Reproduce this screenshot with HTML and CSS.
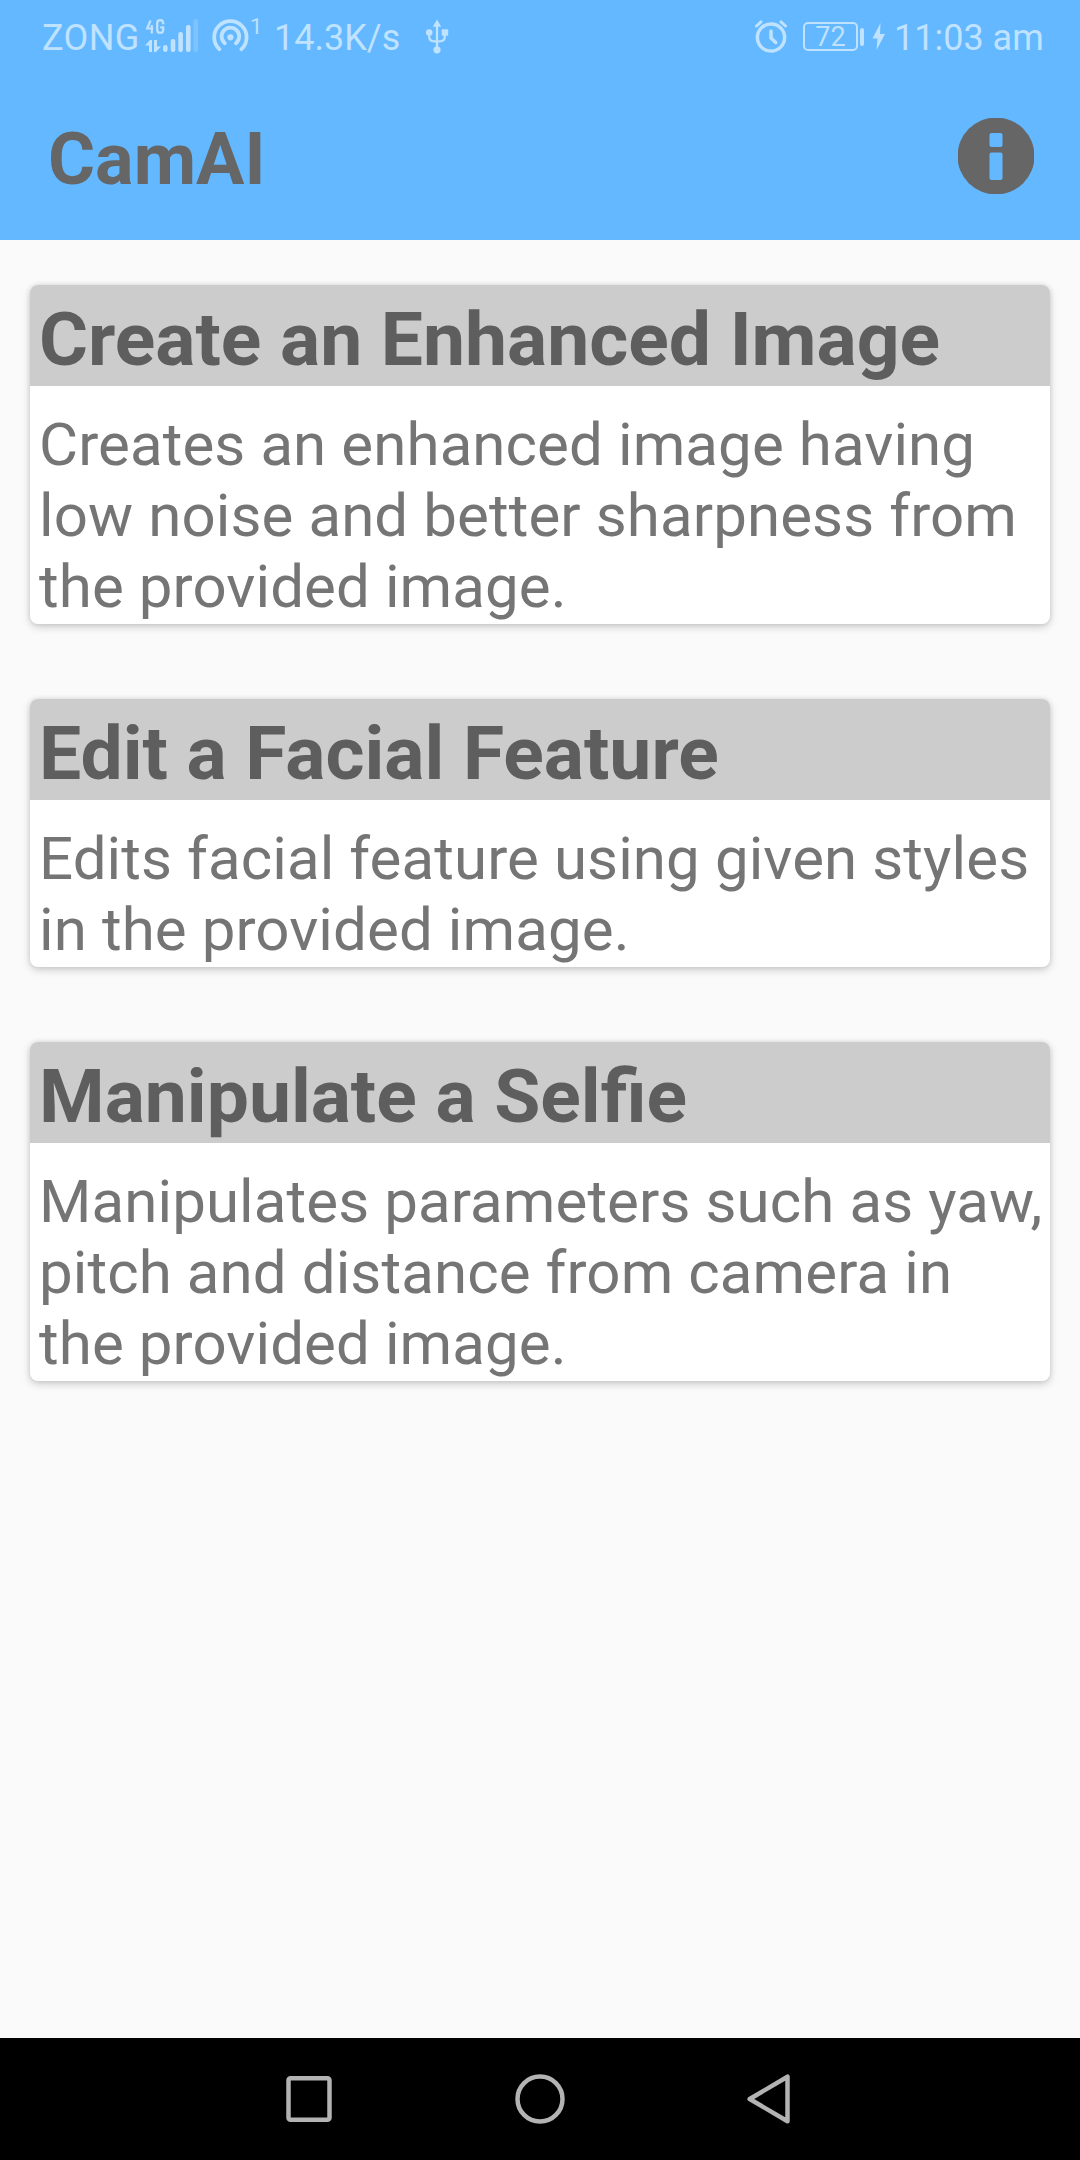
FILE: index.html
```html
<!DOCTYPE html>
<html lang="en">
<head>
<meta charset="utf-8">
<title>CamAI</title>
<link rel="stylesheet" href="styles.css">
</head>
<body>
<div class="screen">
  <div class="status">
    <span class="carrier">ZONG</span>
    <svg class="signal" width="56" height="36" viewBox="0 0 56 36" fill="currentColor">
      <path d="M5.5 3.5 2.2 11.5H8.3M6.8 8V16.5" fill="none" stroke="currentColor" stroke-width="2.2"/>
      <path d="M18.2 7.2V6.2Q18.2 3.1 15.2 3.1Q12.2 3.1 12.2 6.2V12.8Q12.2 15.9 15.2 15.9Q18.2 15.9 18.2 12.8V10.3H15.2" fill="none" stroke="currentColor" stroke-width="2.3"/>
      <path d="M0 28.5 5 23h2v12H4v-6.5zM9 23h3v6.5h4L11 35H9z"/>
      <rect x="18" y="28" width="4.6" height="7" rx="2.2"/>
      <rect x="25.7" y="22" width="4.6" height="13" rx="2"/>
      <rect x="33.3" y="15" width="4.6" height="20" rx="2"/>
      <rect x="41" y="8" width="4.6" height="27" rx="2"/>
      <rect x="48.4" y="2" width="4.6" height="33" rx="2" opacity=".28"/>
    </svg>
    <svg class="hotspot" width="38" height="36" viewBox="0 0 38 36" fill="none" stroke="currentColor" stroke-width="3.8" stroke-linecap="round">
      <path d="M7.4 32.2A16.2 16.2 0 1 1 29.4 32.2"/>
      <path d="M12.8 26.2A8.8 8.8 0 1 1 24 26.2"/>
      <circle cx="18.4" cy="20.3" r="3.1" fill="currentColor" stroke="none"/>
    </svg>
    <span class="count">1</span>
    <span class="speed">14.3K/s</span>
    <svg class="usb" width="24" height="36" viewBox="0 0 24 36" fill="currentColor">
      <path d="M12 6v24M4.2 14v4.500q0 4.800 5 4.800h5.600q5 0 5-4.800V14" fill="none" stroke="currentColor" stroke-width="2.300"/>
      <path d="M12 1.500 16.300 8.800H7.700z"/><circle cx="4.200" cy="14.500" r="3.300"/><rect x="16.700" y="11.200" width="6.500" height="6.500" rx="1"/><circle cx="12" cy="31.800" r="3.600"/>
    </svg>
    <svg class="alarm" width="34" height="36" viewBox="0 0 34 36" fill="none" stroke="currentColor" stroke-width="3.500" stroke-linecap="round">
      <circle cx="17" cy="20.500" r="13.600"/><path d="M17 14v7l4.700 4.500"/><path d="M2.500 9 7 4.800M27 4.800l4.500 4.200" stroke-width="3"/>
    </svg>
    <span class="battery"><span class="level">72</span></span>
    <span class="tip"></span>
    <svg class="bolt" width="14" height="28" viewBox="0 0 14 28" fill="currentColor"><path d="M8.500 0 .5 15.500h5L4.500 27 13 11H8z"/></svg>
    <span class="time">11:03 am</span>
  </div>
  <header class="bar">
    <h1 class="name">CamAI</h1>
    <svg class="info" width="76" height="76" viewBox="0 0 76 76"><circle cx="38" cy="38" r="38.500" fill="#666"/><rect x="31.500" y="15" width="13" height="14" rx="2" fill="#63b8ff"/><rect x="31.500" y="34.500" width="13" height="27.500" rx="2" fill="#63b8ff"/></svg>
  </header>
  <main class="cards">
    <section class="card"><h2 class="title">Create an Enhanced Image</h2><p class="text">Creates an enhanced image having<br>low noise and better sharpness from<br>the provided image.</p></section>
    <section class="card"><h2 class="title">Edit a Facial Feature</h2><p class="text">Edits facial feature using given styles<br>in the provided image.</p></section>
    <section class="card"><h2 class="title">Manipulate a Selfie</h2><p class="text">Manipulates parameters such as yaw,<br>pitch and distance from camera in<br>the provided image.</p></section>
  </main>
  <nav class="nav">
    <svg width="60" height="60" viewBox="0 0 60 60"><rect x="9.500" y="9.300" width="41" height="41.500" rx="2"/></svg>
    <svg width="60" height="60" viewBox="0 0 60 60"><circle cx="30" cy="30" r="22.500"/></svg>
    <svg width="60" height="60" viewBox="0 0 60 60"><path d="M8.700 30 46.500 7.700V52.300z"/></svg>
  </nav>
</div>
</body>
</html>
```
FILE: styles.css
```css
* { box-sizing: border-box; }
body { margin: 0; font-family: Roboto, sans-serif; background: #fafafa; }
h1, h2, p { margin: 0; }
svg { display: block; flex: none; }
.screen { width: 1080px; height: 2160px; display: flex; flex-direction: column; }
.status { height: 72px; flex: none; display: flex; align-items: flex-start; padding: 17px 0 0 42px; background: #63b8ff; color: #bfe2ff; font-size: 36px; line-height: 42px; white-space: nowrap; }
.carrier { width: 103px; letter-spacing: .4px; }
.hotspot { margin-left: 11px; }
.count { font-size: 22px; line-height: 20px; width: 24px; }
.speed { width: 151px; }
.usb { margin-top: 1px; }
.alarm { margin-left: auto; margin-right: 15px; }
.battery { width: 55px; height: 29px; margin-top: 5px; border: 2px solid; border-radius: 5px; display: flex; align-items: center; justify-content: center; }
.level { font-size: 27px; line-height: 27px; padding-top: 1px; }
.tip { width: 4px; height: 18px; margin: 11px 8px 0 2px; border-radius: 2px; background: currentColor; }
.bolt { margin: 6px 9px 0 0; }
.time { width: 186px; margin-left: -1px; }
.bar { height: 168px; flex: none; display: flex; justify-content: space-between; align-items: flex-start; padding: 46px 46px 0 48px; background: #63b8ff; }
.name { font-size: 72px; line-height: 84px; color: #666; }
.cards { flex: 1; display: flex; flex-direction: column; gap: 75px; padding: 45px 30px 0; }
.card { border-radius: 8px; overflow: hidden; background: #fff; box-shadow: 0 3px 8px rgba(0,0,0,.18), 0 0 5px rgba(0,0,0,.1); }
.title { height: 101px; padding: 10px 9px 0; background: #ccc; color: #5e5e5e; font-size: 75px; line-height: 88px; white-space: nowrap; }
.text { padding: 23px 0 2px 9px; color: #757575; font-size: 60px; line-height: 71px; letter-spacing: .1px; white-space: nowrap; }
.nav { height: 122px; flex: none; display: flex; justify-content: center; gap: 171px; padding-top: 31px; background: #000; }
.nav svg { fill: none; stroke: #b3b3b3; stroke-width: 4.500; stroke-linejoin: round; }
```
